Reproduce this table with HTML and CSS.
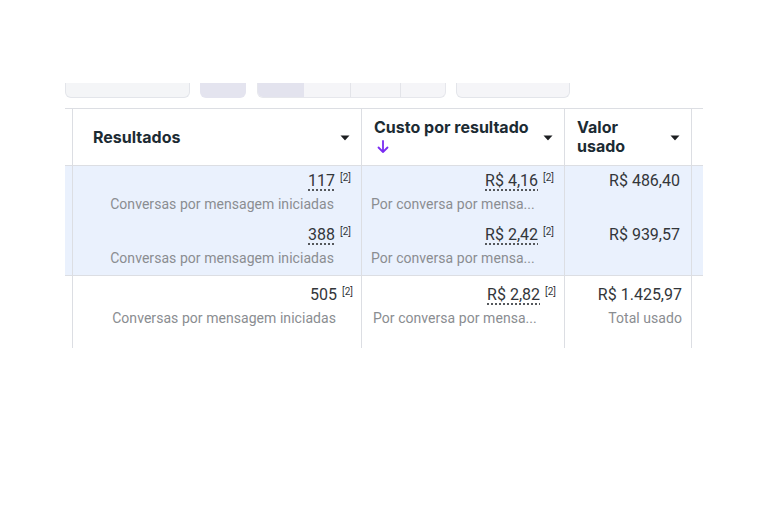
FILE: index.html
```html
<!DOCTYPE html>
<html lang="pt-BR">
<head>
<meta charset="utf-8">
<link rel="stylesheet" href="styles.css">
</head>
<body>
<div class="page">
  <div class="toolbar">
    <div class="pill p1"></div>
    <div class="pill p2"></div>
    <div class="pill seg"><span class="on"></span><span></span><span></span><span></span></div>
    <div class="pill p4"></div>
  </div>
  <div class="table">
    <div class="row head">
      <div class="stub"></div>
      <div class="cell c1"><span class="htxt r">Resultados</span><svg class="caret" viewBox="0 0 10 6"><path d="M0.5 0.5h9l-4.1 4.6q-0.4 0.4-0.8 0z"/></svg></div>
      <div class="cell c2"><div class="htxt">Custo por resultado<svg class="arrow" viewBox="0 0 12 14"><path d="M6 1v11M1.5 7.5L6 12l4.5-4.5"/></svg></div><svg class="caret" viewBox="0 0 10 6"><path d="M0.5 0.5h9l-4.1 4.6q-0.4 0.4-0.8 0z"/></svg></div>
      <div class="cell c3"><div class="htxt">Valor<br>usado</div><svg class="caret" viewBox="0 0 10 6"><path d="M0.5 0.5h9l-4.1 4.6q-0.4 0.4-0.8 0z"/></svg></div>
      <div class="cell c4"></div>
    </div>
    <div class="group">
      <div class="row data">
        <div class="stub"></div>
        <div class="cell c1"><div class="val"><span class="dot">117</span><sup>[2]</sup></div><div class="sub">Conversas por mensagem iniciadas</div></div>
        <div class="cell c2"><div class="val"><span class="dot">R$ 4,16</span><sup>[2]</sup></div><div class="sub left">Por conversa por mensa...</div></div>
        <div class="cell c3"><div class="val">R$ 486,40</div></div>
        <div class="cell c4"></div>
      </div>
      <div class="row data">
        <div class="stub"></div>
        <div class="cell c1"><div class="val"><span class="dot">388</span><sup>[2]</sup></div><div class="sub">Conversas por mensagem iniciadas</div></div>
        <div class="cell c2"><div class="val"><span class="dot">R$ 2,42</span><sup>[2]</sup></div><div class="sub left">Por conversa por mensa...</div></div>
        <div class="cell c3"><div class="val">R$ 939,57</div></div>
        <div class="cell c4"></div>
      </div>
    </div>
    <div class="row data total">
      <div class="stub"></div>
      <div class="cell c1"><div class="val"><span>505</span><sup>[2]</sup></div><div class="sub">Conversas por mensagem iniciadas</div></div>
      <div class="cell c2"><div class="val"><span class="dot">R$ 2,82</span><sup>[2]</sup></div><div class="sub left">Por conversa por mensa...</div></div>
      <div class="cell c3"><div class="val">R$ 1.425,97</div><div class="sub">Total usado</div></div>
      <div class="cell c4"></div>
    </div>
  </div>
</div>
</body>
</html>
```
FILE: styles.css
```css
* { box-sizing: border-box; }
html, body { margin: 0; background: #fff; }
body { font-family: Roboto, "Liberation Sans", sans-serif; }

.page { padding: 83px 0 0 65px; width: 703px; }

.toolbar { display: flex; height: 15px; }
.pill { height: 15px; border-radius: 0 0 6px 6px; }
.p1 { width: 125px; background: #f4f5f7; border: 1px solid #e3e5ea; border-top: 0; }
.p2 { width: 46px; margin-left: 10px; background: #e4e4ef; }
.seg { width: 189px; margin-left: 11px; display: flex; overflow: hidden; background: #f5f5f8; border: 1px solid #e6e7ec; border-top: 0; }
.seg span { flex: none; height: 100%; }
.seg span:nth-child(1) { width: 46px; background: #e3e3ee; }
.seg span:nth-child(2) { width: 46px; }
.seg span:nth-child(3) { width: 50px; border-left: 1px solid #e3e4e9; }
.seg span:nth-child(4) { width: 46px; border-left: 1px solid #e3e4e9; }
.p4 { width: 114px; margin-left: 10px; background: #f5f5f8; border: 1px solid #e3e5ea; border-top: 0; }

.table { margin-top: 10px; border-top: 1px solid #dcdee3; width: 638px; }
.row { display: grid; grid-template-columns: 7px 289px 203px 127px 12px; }
.cell { border-left: 1px solid #dcdee3; }

.head { height: 57px; border-bottom: 1px solid #dcdee3; }
.head .cell { display: flex; align-items: center; justify-content: space-between; padding: 0 11px 0 12px; }
.head .c1 { padding-left: 20px; }
.htxt { font-family: Inter, "Liberation Sans", sans-serif; font-weight: 700; font-size: 16px; line-height: 19px; color: #1c2b33; }
.caret { width: 10px; height: 6px; fill: #1c1e21; flex: none; margin-top: 2px; }
.arrow { display: block; width: 12px; height: 14px; margin: 3px 0 2px 3px; fill: none; stroke: #7a2cf2; stroke-width: 1.8; stroke-linecap: round; stroke-linejoin: round; }

.group { background: #eaf1fd; border-bottom: 1px solid #dcdee3; }
.data { height: 54px; }
.group .data:last-child { height: 55px; }
.data .cell { padding: 5px 11px 0 10px; min-width: 0; }
.data .c1 { padding-right: 27px; text-align: right; }
.data .c2 { padding-right: 27px; padding-left: 9px; }
.data .c3 { text-align: right; }
.val { font-size: 16px; line-height: 20px; color: #33363a; text-align: right; white-space: nowrap; }
.c1 .val, .c2 .val { margin-right: -17px; }
.val sup { font-size: 10px; vertical-align: top; line-height: 12px; margin-left: 5px; color: #33363a; position: relative; top: 1px; }
.dot { text-decoration: underline dotted #55585c; text-underline-offset: 3px; text-decoration-thickness: 1.5px; }
.sub { margin-top: 4px; font-size: 14px; line-height: 18px; color: #8a8d91; white-space: nowrap; letter-spacing: 0.05px; }
.left { text-align: left; }

.total { height: 72px; }
.total .cell { padding-top: 9px; padding-left: 12px; padding-right: 9px; }
.total .c2 { padding-left: 11px; }
.total .c1, .total .c2 { padding-right: 25px; }
```
